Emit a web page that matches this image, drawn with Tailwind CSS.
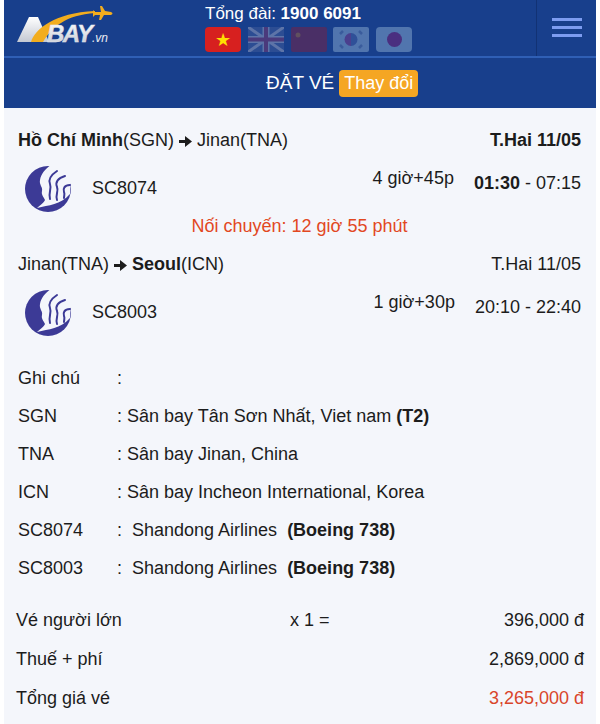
<!DOCTYPE html>
<html lang="vi">
<head>
  <meta charset="UTF-8" />
  <title>Abay</title>
  <script src="https://cdn.jsdelivr.net/npm/@tailwindcss/browser@4"></script>
</head>
<body class="bg-white font-['Liberation_Sans',Arial,sans-serif] text-[#1c1c1c] overflow-hidden">
<div class="ml-1 w-[592px] h-[724px] bg-[#f4f6fb] overflow-hidden">
  <!-- header -->
  <header class="bg-[#183f8c] h-[58px] flex border-b-2 border-[#2f5fb5]">
    <div class="w-[201px] shrink-0">
      <svg width="112" height="50" viewBox="0 0 112 50">
        <defs>
          <linearGradient id="silver" x1="0" y1="0" x2="0" y2="1">
            <stop offset="0" stop-color="#ffffff"/>
            <stop offset="1" stop-color="#c3c8d2"/>
          </linearGradient>
        </defs>
        <path d="M13 42 L25 17 L34 17 L45 42 Z" fill="url(#silver)"/>
        <path d="M27 42 C31 29 50 13 91 11 L91 13 C62 15 48 27 39 42 Z" fill="#f2ad1e"/>
        <path d="M96 6 L98 6 L101 11 L107 12 Q110 13.500 107 15 L100 15 L97 20 L95 20 L96 15 L91 15 L89 17 L89 10 L91 12 L97 12 Z" fill="#f2ad1e"/>
        <text x="43" y="42" font-size="24" font-weight="700" font-style="italic" letter-spacing="-1.500" fill="url(#silver)" stroke="#e6e8ee" stroke-width="0.400">BAY</text>
        <text x="88" y="42" font-size="12" font-style="italic" fill="#e8ebf2">.vn</text>
      </svg>
    </div>
    <div class="flex-1 flex flex-col items-start pt-[5px]">
      <p class="text-[17px] leading-[18px] text-white">Tổng đài: <b>1900 6091</b></p>
      <div class="flex gap-[6.75px] mt-[4px]">
        <div class="w-[36px] h-[25px] rounded-sm bg-[#d7201f] flex items-center justify-center text-[#ffe000] text-[18px] leading-none">★</div>
        <svg width="36" height="25" viewBox="0 0 36 25">
          <rect width="36" height="25" fill="#2c4d93"/>
          <path d="M0 0 L36 25 M36 0 L0 25" stroke="#5d74a8" stroke-width="3"/>
          <path d="M18 0 V25 M0 12.500 H36" stroke="#5d74a8" stroke-width="7"/>
          <path d="M18 0 V25 M0 12.500 H36" stroke="#4a3a7c" stroke-width="4"/>
        </svg>
        <svg width="36" height="25" viewBox="0 0 36 25">
          <rect width="36" height="25" rx="2" fill="#4a2f66"/>
          <circle cx="7" cy="8" r="2.500" fill="#60505f"/>
        </svg>
        <svg width="36" height="25" viewBox="0 0 36 25">
          <rect width="36" height="25" rx="2" fill="#5175ae"/>
          <path d="M18 6 A6.500 6.500 0 0 1 18 19 Z" fill="#2f5098"/>
          <path d="M18 6 A6.500 6.500 0 0 0 18 19 Z" fill="#4a3f8e"/>
          <path d="M7 7 L10 4 M26 4 L29 7 M7 18 L10 21 M26 21 L29 18" stroke="#3a5c9c" stroke-width="2.500"/>
        </svg>
        <div class="w-[36px] h-[25px] rounded-sm bg-[#5175ae] flex items-center justify-center"><span class="w-[15px] h-[15px] rounded-full bg-[#4a2f80]"></span></div>
      </div>
    </div>
    <div class="w-[60px] border-l border-[#123274] flex flex-col items-center justify-center gap-[5px] pb-[2px]">
      <span class="block w-[30px] h-[3px] bg-[#7d9cf0]"></span>
      <span class="block w-[30px] h-[3px] bg-[#7d9cf0]"></span>
      <span class="block w-[30px] h-[3px] bg-[#7d9cf0]"></span>
    </div>
  </header>
  <div class="bg-[#183f8c] h-[50px] flex items-center pl-[262px] gap-[5px] text-white text-[19px]">
    <span>ĐẶT VÉ</span>
    <span class="bg-[#f5a623] rounded-sm px-[5px] text-[18px] leading-[27px]">Thay đổi</span>
  </div>

  <!-- flights -->
  <section class="pl-[14px] pr-[15px] pt-[22px] text-[18px] leading-[20px]">
    <div class="flex justify-between">
      <p><b>Hồ Chí Minh</b>(SGN) <svg class="inline-block align-[-1px]" width="13" height="11" viewBox="0 0 13 11"><path d="M0 4 H6 V0 L13 5.500 L6 11 V7 H0 Z" fill="#1c1c1c"/></svg> Jinan(TNA)</p>
      <b>T.Hai 11/05</b>
    </div>
    <div class="flex items-center h-[66px] pt-[12px]">
      <svg width="48" height="48" viewBox="0 0 48 48" class="ml-[6px]">
        <circle cx="24" cy="24" r="23" fill="#3c3a96"/>
        <path d="M27 0 C21 4 17 9 16 15 C15 20 19 22 18 26 C17 30 20 32 21 35 C20 38 16 40 13 43 C25 40 36 40 46 29 L48 0 Z" fill="#f4f6fb"/>
        <g fill="none" stroke="#3c3a96" stroke-width="2" stroke-linecap="round">
          <path d="M33 6 C27 10 24 14 26 19 C28 24 24 28 26 34"/>
          <path d="M41 11 C34 13 31 17 33 22 C35 26 31 30 33 35"/>
          <path d="M46 20 C40 20 39 24 40 27 C41 29 40 31 40 33"/>
        </g>
      </svg>
      <span class="ml-[20px] -mt-[2px]">SC8074</span>
      <span class="ml-auto mr-[20px] -mt-[22px]">4 giờ+45p</span>
      <span class="-mt-[12px]"><b>01:30</b> - 07:15</span>
    </div>
    <p class="text-center text-[#e2481f]">Nối chuyến: 12 giờ 55 phút</p>
    <div class="flex justify-between mt-[18px]">
      <p>Jinan(TNA) <svg class="inline-block align-[-1px]" width="13" height="11" viewBox="0 0 13 11"><path d="M0 4 H6 V0 L13 5.500 L6 11 V7 H0 Z" fill="#1c1c1c"/></svg> <b>Seoul</b>(ICN)</p>
      <span>T.Hai 11/05</span>
    </div>
    <div class="flex items-center h-[66px] pt-[12px]">
      <svg width="48" height="48" viewBox="0 0 48 48" class="ml-[6px]">
        <circle cx="24" cy="24" r="23" fill="#3c3a96"/>
        <path d="M27 0 C21 4 17 9 16 15 C15 20 19 22 18 26 C17 30 20 32 21 35 C20 38 16 40 13 43 C25 40 36 40 46 29 L48 0 Z" fill="#f4f6fb"/>
        <g fill="none" stroke="#3c3a96" stroke-width="2" stroke-linecap="round">
          <path d="M33 6 C27 10 24 14 26 19 C28 24 24 28 26 34"/>
          <path d="M41 11 C34 13 31 17 33 22 C35 26 31 30 33 35"/>
          <path d="M46 20 C40 20 39 24 40 27 C41 29 40 31 40 33"/>
        </g>
      </svg>
      <span class="ml-[20px] -mt-[2px]">SC8003</span>
      <span class="ml-auto mr-[20px] -mt-[22px]">1 giờ+30p</span>
      <span class="-mt-[12px]">20:10 - 22:40</span>
    </div>
  </section>

  <!-- notes -->
  <section class="px-[14px] mt-[19px] text-[18px] leading-[38px]">
    <div class="flex"><span class="w-[99px]">Ghi chú</span><span>:</span></div>
    <div class="flex"><span class="w-[99px]">SGN</span><span>: Sân bay Tân Sơn Nhất, Viet nam <b>(T2)</b></span></div>
    <div class="flex"><span class="w-[99px]">TNA</span><span>: Sân bay Jinan, China</span></div>
    <div class="flex"><span class="w-[99px]">ICN</span><span>: Sân bay Incheon International, Korea</span></div>
    <div class="flex"><span class="w-[99px]">SC8074</span><span>:&nbsp; Shandong Airlines&nbsp; <b>(Boeing 738)</b></span></div>
    <div class="flex"><span class="w-[99px]">SC8003</span><span>:&nbsp; Shandong Airlines&nbsp; <b>(Boeing 738)</b></span></div>
  </section>

  <!-- prices -->
  <section class="px-[12px] mt-[14px] text-[18px] leading-[39px]">
    <div class="grid grid-cols-[274px_1fr_auto]"><span>Vé người lớn</span><span>x 1 =</span><span>396,000 đ</span></div>
    <div class="flex justify-between"><span>Thuế + phí</span><span>2,869,000 đ</span></div>
    <div class="flex justify-between"><span>Tổng giá vé</span><span class="text-[#d9452a]">3,265,000 đ</span></div>
  </section>
</div>
</body>
</html>
